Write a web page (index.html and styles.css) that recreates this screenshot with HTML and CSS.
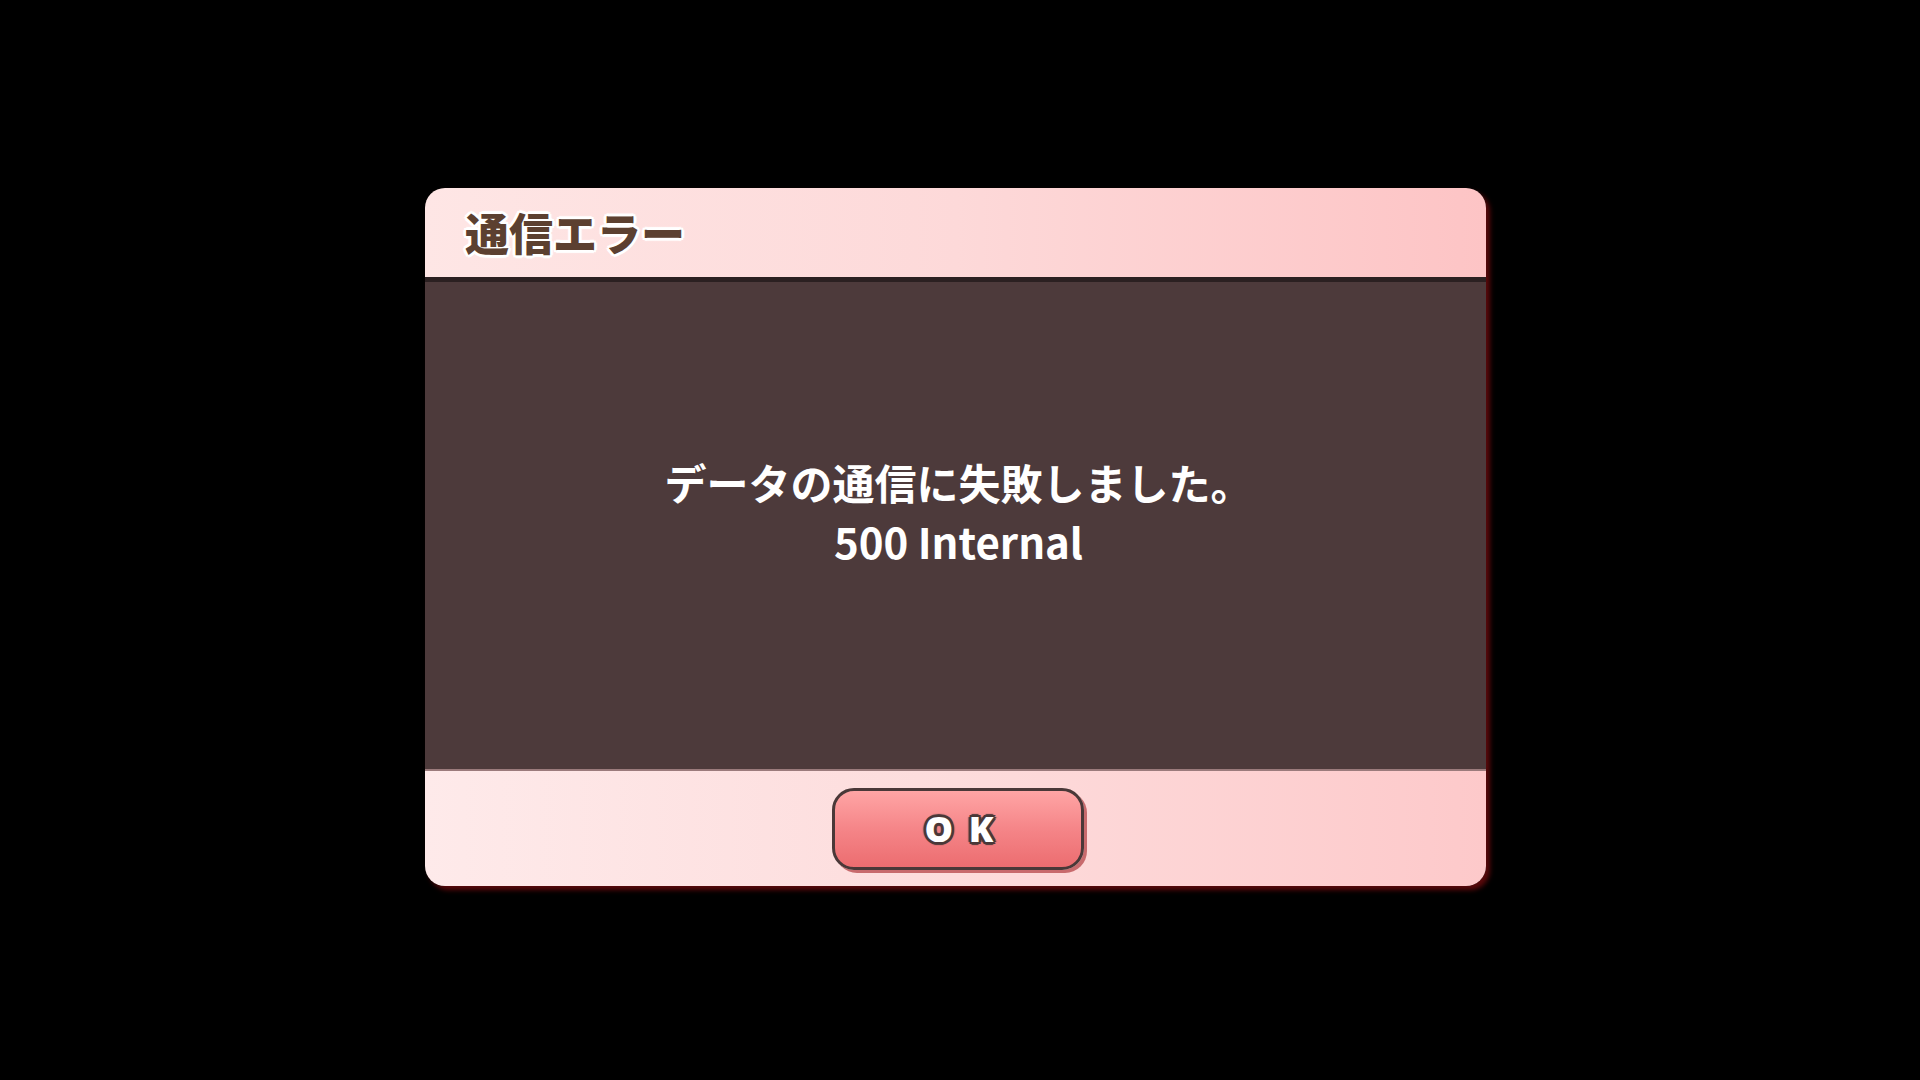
FILE: index.html
```html
<!DOCTYPE html>
<html lang="ja">
<head>
  <meta charset="UTF-8" />
  <title>通信エラー</title>
  <link rel="stylesheet" href="styles.css">
</head>
<body>
  <div class="dialog">
    <div class="dialog-head">
      <h1>通信エラー</h1>
    </div>
    <div class="dialog-body">
      <p>データの通信に失敗しました。<br>500 Internal</p>
    </div>
    <div class="dialog-foot">
      <button class="ok">O K</button>
    </div>
  </div>
</body>
</html>
```
FILE: styles.css
```css
:root {
  --marrom: #5c4030;
  --fundo: #4d3a3b;
  --linha: #2b2021;
}
html, body {
  margin: 0;
  height: 100%;
}
body {
  background: #000;
  font-family: "Noto Sans CJK JP", "Noto Sans", sans-serif;
  display: flex;
  align-items: flex-start;
  padding: 188px 0 0 425px;
  box-sizing: border-box;
}
.dialog {
  width: 1061px;
  height: 698px;
  border-radius: 20px;
  overflow: hidden;
  display: flex;
  flex-direction: column;
  box-shadow: 4px 4px 5px rgba(95, 10, 12, 0.95);
}
.dialog-head {
  height: 89px;
  background: linear-gradient(90deg, #fee6e5 0%, #fdd9d9 50%, #fdc4c5 100%);
  border-bottom: 5px solid var(--linha);
  display: flex;
  align-items: center;
  padding-left: 40px;
}
.dialog-head h1 {
  margin: 0 0 2px;
  font-size: 44px;
  font-weight: 900;
  color: var(--marrom);
  text-shadow:
    2px 0 0 #fff, -2px 0 0 #fff, 0 2px 0 #fff, 0 -2px 0 #fff,
    2px 2px 0 #fff, -2px -2px 0 #fff, 2px -2px 0 #fff, -2px 2px 0 #fff,
    3px 0 1px #fff, -3px 0 1px #fff, 0 3px 1px #fff, 0 -3px 1px #fff;
}
.dialog-body {
  flex: 1;
  background: var(--fundo);
  display: flex;
  align-items: center;
  justify-content: center;
  border-bottom: 2px solid #9b7b7c;
}
.dialog-body p {
  margin: 0;
  color: #fff;
  font-size: 42px;
  font-weight: 700;
  line-height: 59px;
  text-align: center;
  padding-bottom: 30px;
  margin-left: 6px;
}
.dialog-foot {
  height: 115px;
  background: linear-gradient(90deg, #feeaea 0%, #fddcdc 50%, #fdc9ca 100%);
  display: flex;
  align-items: center;
  justify-content: center;
}
.ok {
  width: 252px;
  height: 82px;
  border: 3px solid #4a3838;
  border-radius: 22px;
  background: linear-gradient(180deg, #ffa5a5 0%, #f58588 50%, #ec6d70 100%);
  box-shadow: 3px 3px 0 #c86a6d;
  color: #fff;
  font-family: "Noto Sans", "Noto Sans CJK JP", sans-serif;
  font-size: 36px;
  font-weight: 900;
  letter-spacing: 3px;
  cursor: pointer;
  margin-left: 4px;
  padding: 0 0 0 6px;
  text-shadow:
    2px 0 0 #4a3838, -2px 0 0 #4a3838, 0 2px 0 #4a3838, 0 -2px 0 #4a3838,
    2px 2px 0 #4a3838, -2px -2px 0 #4a3838, 2px -2px 0 #4a3838, -2px 2px 0 #4a3838,
    3px 0 1px #4a3838, -3px 0 1px #4a3838, 0 3px 1px #4a3838, 0 -3px 1px #4a3838;
}
```
